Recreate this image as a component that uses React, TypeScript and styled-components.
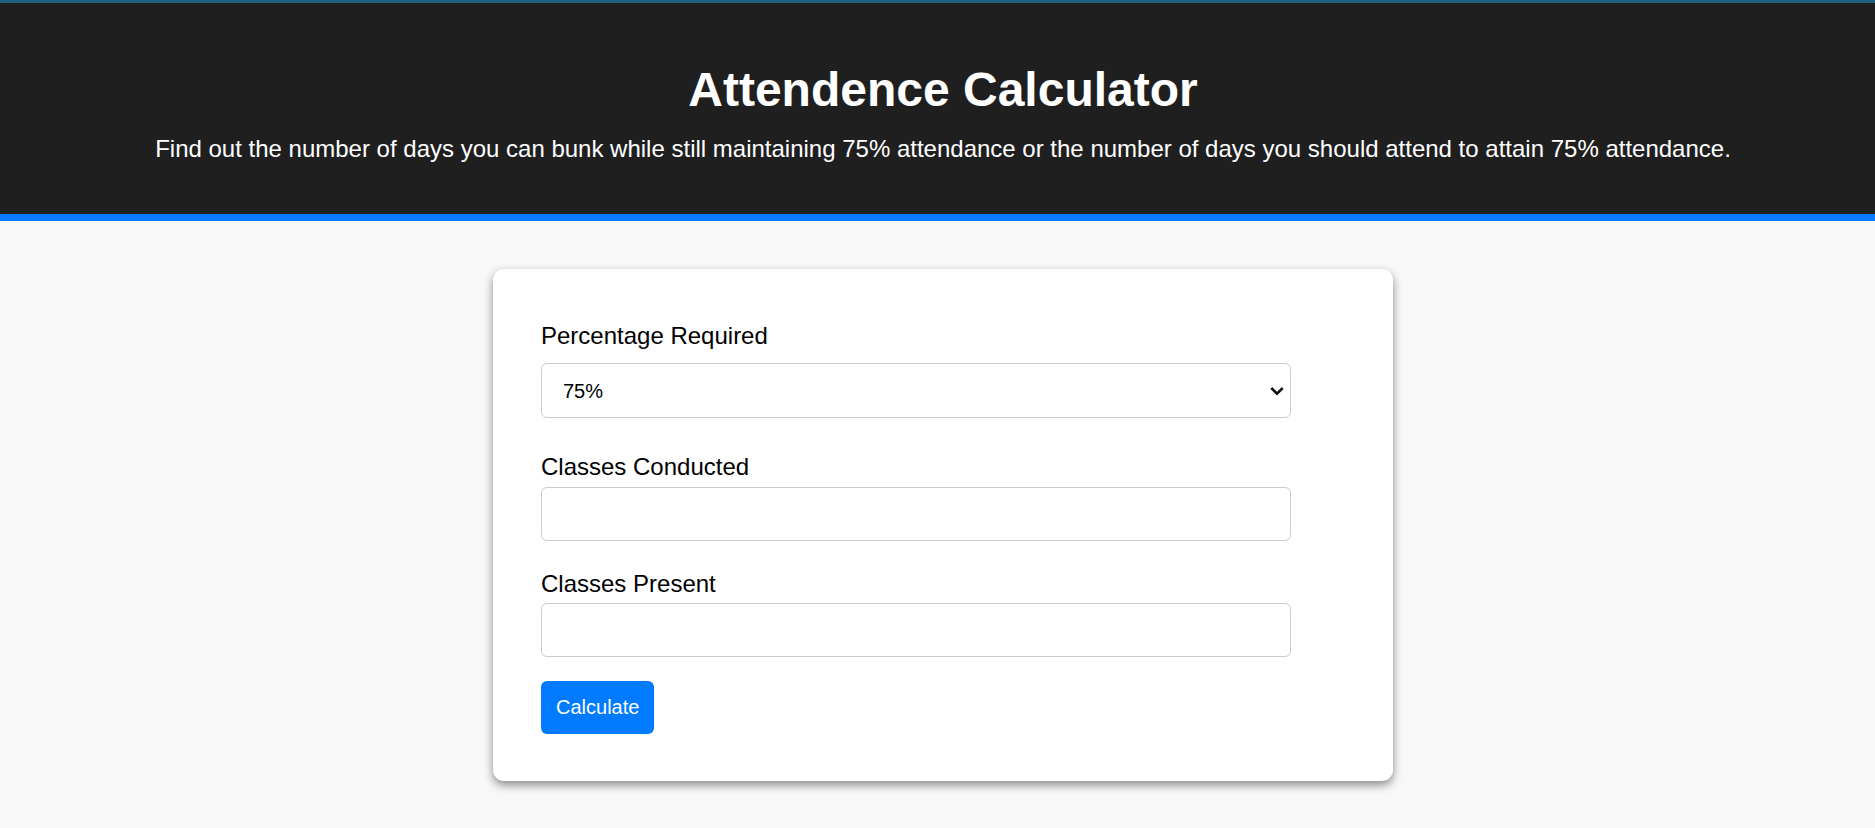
import styled, { createGlobalStyle } from "styled-components";

const GlobalStyle = createGlobalStyle`
  * {
    box-sizing: border-box;
  }
  body {
    margin: 0;
    background: #f8f8f8;
    font-family: "Liberation Sans", Arial, sans-serif;
    color: #000;
  }
`;

function App() {
  return (
    <>
      <GlobalStyle />
      <Header>
        <Title>Attendence Calculator</Title>
        <Subtitle>
          Find out the number of days you can bunk while still maintaining 75%
          attendance or the number of days you should attend to attain 75%
          attendance.
        </Subtitle>
      </Header>
      <Main>
        <Card>
          <Field $gap={35}>
            <Label htmlFor="pct" $gap={13}>
              Percentage Required
            </Label>
            <SelectWrap>
              <Select id="pct" defaultValue="75">
                <option value="65">65%</option>
                <option value="75">75%</option>
                <option value="85">85%</option>
              </Select>
              <Chevron width="14" height="9" viewBox="0 0 14 9">
                <polyline
                  points="1.3,1.5 7,7.2 12.7,1.5"
                  fill="none"
                  stroke="#111"
                  strokeWidth="2.5"
                />
              </Chevron>
            </SelectWrap>
          </Field>
          <Field $gap={29}>
            <Label htmlFor="conducted" $gap={6}>
              Classes Conducted
            </Label>
            <Input id="conducted" type="number" />
          </Field>
          <Field $gap={24}>
            <Label htmlFor="present" $gap={5}>
              Classes Present
            </Label>
            <Input id="present" type="number" />
          </Field>
          <Button type="button">Calculate</Button>
        </Card>
      </Main>
    </>
  );
}

export default App;

const Header = styled.header`
  background: #1f1f1f;
  border-top: 3px solid #22607f;
  border-bottom: 7px solid #007bff;
  padding: 59px 0 51px 11px;
  text-align: center;
  color: #fff;
`;

const Title = styled.h1`
  margin: 0 0 18px;
  font-size: 48px;
  font-weight: bold;
  line-height: 55px;
`;

const Subtitle = styled.p`
  margin: 0;
  font-size: 24px;
  line-height: 28px;
`;

const Main = styled.main`
  display: flex;
  justify-content: center;
  padding: 48px 0 40px 11px;
`;

const Card = styled.div`
  width: 900px;
  background: #fff;
  border-radius: 11px;
  box-shadow: 0 4px 10px rgba(0, 0, 0, 0.45);
  padding: 53px 48px 47px;
`;

const Field = styled.div<{ $gap: number }>`
  display: flex;
  flex-direction: column;
  width: 750px;
  margin-bottom: ${(p) => p.$gap}px;
`;

const Label = styled.label<{ $gap: number }>`
  font-size: 24px;
  line-height: 28px;
  margin-bottom: ${(p) => p.$gap}px;
`;

const SelectWrap = styled.div`
  position: relative;
`;

const Select = styled.select`
  appearance: none;
  width: 100%;
  height: 55px;
  padding: 0 30px 0 21px;
  border: 1px solid #ccc;
  border-radius: 6px;
  background: #fff;
  font-family: inherit;
  font-size: 20px;
  color: #000;
`;

const Chevron = styled.svg`
  position: absolute;
  right: 7px;
  top: 50%;
  transform: translateY(-50%);
  pointer-events: none;
`;

const Input = styled.input`
  width: 100%;
  height: 54px;
  padding: 0 16px;
  border: 1px solid #ccc;
  border-radius: 6px;
  font-family: inherit;
  font-size: 20px;
`;

const Button = styled.button`
  display: block;
  background: #007bff;
  color: #fff;
  border: none;
  border-radius: 6px;
  padding: 15px;
  font-family: inherit;
  font-size: 20px;
  line-height: 23px;
  cursor: pointer;
`;
